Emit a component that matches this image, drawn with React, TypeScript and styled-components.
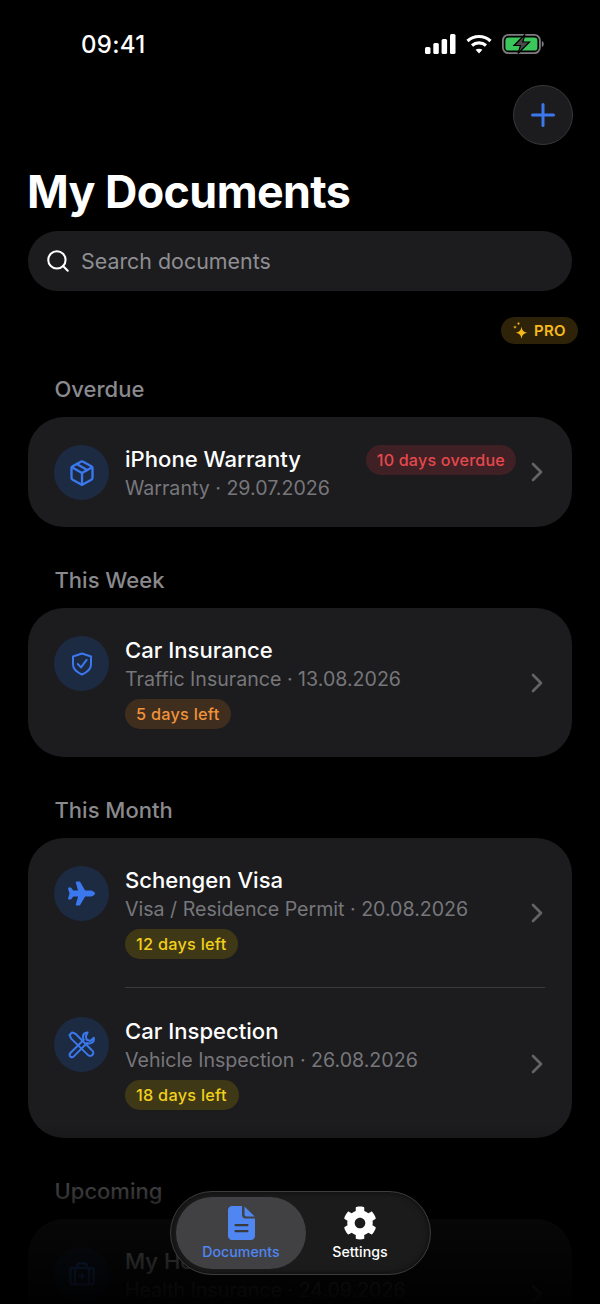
import styled, { createGlobalStyle } from "styled-components";
import { Package, BriefcaseMedical, Search, ChevronRight, Plus } from "lucide-react";
import { FaPlane, FaCog } from "react-icons/fa";
import { ReactNode } from "react";

const GlobalStyle = createGlobalStyle`
  html, body {
    margin: 0;
    padding: 0;
    background: #000;
    font-family: Inter, "Liberation Sans", sans-serif;
    -webkit-font-smoothing: antialiased;
  }
`;

const Screen = styled.div`
  position: relative;
  width: 600px;
  height: 1304px;
  overflow: hidden;
  background: #000;
  color: #fff;
`;

const StatusBar = styled.div`
  height: 85px;
  box-sizing: border-box;
  padding: 30px 56px 0 81px;
  display: flex;
  justify-content: space-between;
  align-items: flex-start;
`;

const Time = styled.div`
  font-size: 24px;
  line-height: 29px;
  font-weight: 500;
  letter-spacing: 0.3px;
`;

const StatusIcons = styled.div`
  display: flex;
  align-items: center;
  gap: 10px;
  padding-top: 4px;
`;

const Content = styled.div`
  padding: 0 28px;
`;

const TopRow = styled.div`
  display: flex;
  justify-content: flex-end;
  margin-right: -1px;
`;

const AddButton = styled.div`
  width: 60px;
  height: 60px;
  box-sizing: border-box;
  border-radius: 50%;
  background: #1c1c1e;
  border: 1px solid #38383a;
  color: #3b78ee;
  display: flex;
  align-items: center;
  justify-content: center;
`;

const Title = styled.h1`
  margin: 21px 0 0 -1px;
  font-size: 44.8px;
  line-height: 52px;
  font-weight: 700;
  letter-spacing: -0.6px;
`;

const SearchBar = styled.div`
  margin-top: 13px;
  height: 60px;
  border-radius: 30px;
  background: #1c1c1e;
  display: flex;
  align-items: center;
  padding-left: 17px;
  gap: 10px;
  color: #fff;
`;

const SearchText = styled.span`
  font-size: 21.4px;
  color: #8e8e93;
`;

const ProRow = styled.div`
  display: flex;
  justify-content: flex-end;
  margin: 26px -6px 0 0;
`;

const ProBadge = styled.div`
  height: 27px;
  width: 77px;
  box-sizing: border-box;
  border-radius: 14px;
  background: #2e2308;
  color: #f7b91c;
  display: flex;
  align-items: center;
  padding-left: 11px;
  gap: 6px;
  font-size: 15px;
  font-weight: 600;
  letter-spacing: 0.3px;
`;

const SectionLabel = styled.div<{ $top: number }>`
  margin: ${(p) => p.$top}px 0 15px 26.5px;
  height: 26px;
  line-height: 26px;
  font-size: 22px;
  font-weight: 500;
  color: #8a8a8e;
`;

const Card = styled.div`
  background: #1c1c1e;
  border-radius: 36px;
  padding: 0 27px 0 26px;
`;

const Row = styled.div<{ $compact?: boolean; $tall?: boolean }>`
  display: flex;
  align-items: flex-start;
  position: relative;
  box-sizing: border-box;
  gap: 16px;
  padding: 28px 0 ${(p) => (p.$compact ? 25 : 27)}px;
  min-height: ${(p) => (p.$tall ? 149 : 0)}px;
`;

const IconCircle = styled.div`
  width: 55px;
  height: 55px;
  flex: none;
  border-radius: 50%;
  background: #1c2a42;
  color: #3b78ee;
  display: flex;
  align-items: center;
  justify-content: center;
`;

const RowBody = styled.div`
  flex: 1;
  min-width: 0;
`;

const RowTop = styled.div`
  display: flex;
  justify-content: space-between;
  align-items: flex-start;
  height: 28px;
`;

const RowTitle = styled.div`
  font-size: 22.1px;
  line-height: 28px;
  font-weight: 500;
  color: #fff;
`;

const RowSub = styled.div`
  margin-top: 1px;
  font-size: 19.6px;
  line-height: 28px;
  color: #77777b;
`;

const Chip = styled.div<{ $fg: string; $bg: string }>`
  display: inline-flex;
  align-items: center;
  height: 30px;
  padding: 0 11px;
  border-radius: 15px;
  font-size: 16.1px;
  font-weight: 500;
  letter-spacing: 0.2px;
  color: ${(p) => p.$fg};
  background: ${(p) => p.$bg};
`;

const BottomChip = styled(Chip)`
  margin-top: 6px;
  padding: 0 12px 0 11px;
  display: flex;
  width: fit-content;
  font-size: 16.3px;
  letter-spacing: 0.25px;
`;

const InlineChipSlot = styled.div`
  margin-right: 29px;
`;

const Arrow = styled.div`
  position: absolute;
  right: -8px;
  top: 50%;
  transform: translateY(-50%);
  color: #636366;
  display: flex;
`;

const Divider = styled.div`
  height: 1px;
  margin: 0 0 1px 71px;
  background: #3a3a3c;
`;

const BottomFade = styled.div`
  position: absolute;
  left: 0;
  right: 0;
  bottom: 0;
  height: 180px;
  background: linear-gradient(to bottom, rgba(0, 0, 0, 0) 0%, rgba(0, 0, 0, 0.72) 45%, rgba(0, 0, 0, 0.97) 100%);
`;

const TabBar = styled.div`
  position: absolute;
  left: 170px;
  top: 1191px;
  width: 261px;
  height: 84px;
  box-sizing: border-box;
  padding: 5px;
  border-radius: 42px;
  background: #1b1b1c;
  border: 1px solid #3c3c3e;
  box-shadow: inset 0 0 6px rgba(0, 0, 0, 0.6);
  display: flex;
`;

const TabItem = styled.div<{ $active?: boolean }>`
  width: ${(p) => (p.$active ? 130 : 108)}px;
  height: 72px;
  border-radius: 36px;
  background: ${(p) => (p.$active ? "#414143" : "transparent")};
  color: ${(p) => (p.$active ? "#4f86f2" : "#fff")};
  display: flex;
  flex-direction: column;
  align-items: center;
  justify-content: center;
  gap: 3px;
  font-size: 14.2px;
  font-weight: 500;
`;

function SignalIcon() {
  return (
    <svg width="31" height="20" viewBox="0 0 31 20" fill="#fff">
      <rect x="0" y="13" width="5.5" height="7" rx="1.5" />
      <rect x="8.3" y="9" width="5.5" height="11" rx="1.5" />
      <rect x="16.6" y="5" width="5.5" height="15" rx="1.5" />
      <rect x="25" y="0" width="5.5" height="20" rx="1.5" />
    </svg>
  );
}

function WifiIcon() {
  return (
    <svg width="26" height="20" viewBox="0 0 26 20" fill="none" stroke="#fff" strokeWidth="3.2">
      <path d="M1.5 7 C8 1 18 1 24.5 7" />
      <path d="M6 11.5 C10 8 16 8 20 11.5" />
      <path d="M13 19.5 L9.6 15.8 C11.5 14.3 14.5 14.3 16.4 15.8 Z" fill="#fff" stroke="none" />
    </svg>
  );
}

function BatteryIcon() {
  return (
    <svg width="42" height="20" viewBox="0 0 42 20">
      <rect x="0.9" y="0.9" width="37" height="18.2" rx="5.5" fill="none" stroke="#7c7c7e" strokeWidth="1.8" />
      <rect x="3.4" y="3.4" width="32" height="13.2" rx="3.2" fill="#3cc75c" />
      <path d="M39.8 7 C41.2 7.4 41.7 8.5 41.7 10 C41.7 11.5 41.2 12.6 39.8 13 Z" fill="#7c7c7e" />
      <path d="M23 0.5 L12 11.5 H18.5 L16 19.5 L27.5 8 H20.8 Z" fill="#4a4a4c" stroke="#000" strokeWidth="1.2" />
    </svg>
  );
}

function SparkleIcon() {
  return (
    <svg width="16" height="17" viewBox="0 0 16 17" fill="#f7b91c">
      <path d="M9.5 4.5 C10 8.4 11.4 10 15.5 10.7 C11.4 11.4 10 13 9.5 17 C9 13 7.6 11.4 3.5 10.7 C7.6 10 9 8.4 9.5 4.5 Z" />
      <path d="M3 3 C3.2 4.4 3.6 4.8 5 5.1 C3.6 5.4 3.2 5.8 3 7.2 C2.8 5.8 2.4 5.4 1 5.1 C2.4 4.8 2.8 4.4 3 3 Z" />
      <circle cx="6.5" cy="1.6" r="1.1" />
    </svg>
  );
}

function ShieldIcon() {
  return (
    <svg width="22" height="24" viewBox="0 0 22 24" fill="none" stroke="currentColor" strokeWidth="2" strokeLinejoin="round" strokeLinecap="round">
      <path d="M11 1.5 L20 4.5 V12.5 C20 17.5 15.5 20.5 11 22.5 C6.5 20.5 2 17.5 2 12.5 V4.5 Z" />
      <path d="M6.8 12 L10 15.4 L15.6 7.8" />
    </svg>
  );
}

function ToolsIcon() {
  return (
    <svg width="29" height="29" viewBox="0 0 29 29" fill="none" stroke="currentColor" strokeWidth="2" strokeLinejoin="round" strokeLinecap="round">
      <path d="M2.5 5 L5 2.5 L8.5 3.8 L24.6 20 C26.4 21.2 26.8 23 25.6 24.6 C24.2 26.4 22 26.2 20.6 24.6 L4.2 8.6 Z" />
      <path d="M20.6 2.4 C17.8 2.2 15.6 4.6 16 7.4 C16.1 8.4 16.3 9 16.8 9.8 L3.4 23 C2.2 24.4 2.4 25.8 3.4 26.6 C4.4 27.4 5.8 27.4 6.8 26.4 L20 13 C21 13.5 22.2 13.7 23.2 13.4 C25.8 12.8 27.2 10.4 26.8 7.8 L23.4 11 L19.6 9.8 L18.8 6.2 Z" />
    </svg>
  );
}

function DocIcon() {
  return (
    <svg width="27" height="34" viewBox="0 0 27 34">
      <path
        fill="#4f86f2"
        d="M4 0 H14 V9 C14 11 15.5 12.5 17.5 12.5 H27 V30 C27 32.2 25.2 34 23 34 H4 C1.8 34 0 32.2 0 30 V4 C0 1.8 1.8 0 4 0 Z"
      />
      <path fill="#4f86f2" d="M16.5 0.5 L26.7 10.5 H18.5 C17.4 10.5 16.5 9.6 16.5 8.5 Z" />
      <rect x="6.5" y="18" width="14" height="2.2" rx="1" fill="#3a3a3c" />
      <rect x="6.5" y="24" width="14" height="2.2" rx="1" fill="#3a3a3c" />
    </svg>
  );
}

interface IDoc {
  icon: ReactNode;
  title: string;
  sub: string;
  chip?: string;
  fg?: string;
  bg?: string;
  inline?: boolean;
}

const YELLOW = { fg: "#f1cf1c", bg: "#3f3817" };

function DocRow({ doc }: { doc: IDoc }) {
  const fg = doc.fg || "";
  const bg = doc.bg || "";
  return (
    <Row $compact={doc.inline} $tall={!doc.inline}>
      <IconCircle>{doc.icon}</IconCircle>
      <RowBody>
        <RowTop>
          <RowTitle>{doc.title}</RowTitle>
          {doc.inline && (
            <InlineChipSlot>
              <Chip $fg={fg} $bg={bg}>
                {doc.chip}
              </Chip>
            </InlineChipSlot>
          )}
        </RowTop>
        <RowSub>{doc.sub}</RowSub>
        {!doc.inline && doc.chip && (
          <BottomChip $fg={fg} $bg={bg}>
            {doc.chip}
          </BottomChip>
        )}
      </RowBody>
      <Arrow>
        <ChevronRight size={32} strokeWidth={2} />
      </Arrow>
    </Row>
  );
}

export default function App() {
  return (
    <Screen>
      <GlobalStyle />
      <StatusBar>
        <Time>09:41</Time>
        <StatusIcons>
          <SignalIcon />
          <WifiIcon />
          <BatteryIcon />
        </StatusIcons>
      </StatusBar>
      <Content>
        <TopRow>
          <AddButton>
            <Plus size={36} strokeWidth={2} />
          </AddButton>
        </TopRow>
        <Title>My Documents</Title>
        <SearchBar>
          <Search size={26} strokeWidth={1.9} />
          <SearchText>Search documents</SearchText>
        </SearchBar>
        <ProRow>
          <ProBadge>
            <SparkleIcon />
            PRO
          </ProBadge>
        </ProRow>

        <SectionLabel $top={32}>Overdue</SectionLabel>
        <Card>
          <DocRow
            doc={{
              icon: <Package size={28} strokeWidth={2} />,
              title: "iPhone Warranty",
              sub: "Warranty · 29.07.2026",
              chip: "10 days overdue",
              fg: "#e5484d",
              bg: "#3f2024",
              inline: true,
            }}
          />
        </Card>

        <SectionLabel $top={40}>This Week</SectionLabel>
        <Card>
          <DocRow
            doc={{
              icon: <ShieldIcon />,
              title: "Car Insurance",
              sub: "Traffic Insurance · 13.08.2026",
              chip: "5 days left",
              fg: "#f0933a",
              bg: "#3f2d1e",
            }}
          />
        </Card>

        <SectionLabel $top={40}>This Month</SectionLabel>
        <Card>
          <DocRow
            doc={{
              icon: <FaPlane size={27} />,
              title: "Schengen Visa",
              sub: "Visa / Residence Permit · 20.08.2026",
              chip: "12 days left",
              ...YELLOW,
            }}
          />
          <Divider />
          <DocRow
            doc={{
              icon: <ToolsIcon />,
              title: "Car Inspection",
              sub: "Vehicle Inspection · 26.08.2026",
              chip: "18 days left",
              ...YELLOW,
            }}
          />
        </Card>

        <SectionLabel $top={40}>Upcoming</SectionLabel>
        <Card>
          <DocRow
            doc={{
              icon: <BriefcaseMedical size={28} strokeWidth={2} />,
              title: "My Health",
              sub: "Health Insurance · 24.09.2026",
            }}
          />
        </Card>
      </Content>
      <BottomFade />
      <TabBar>
        <TabItem $active>
          <DocIcon />
          Documents
        </TabItem>
        <TabItem>
          <FaCog size={34} />
          Settings
        </TabItem>
      </TabBar>
    </Screen>
  );
}
